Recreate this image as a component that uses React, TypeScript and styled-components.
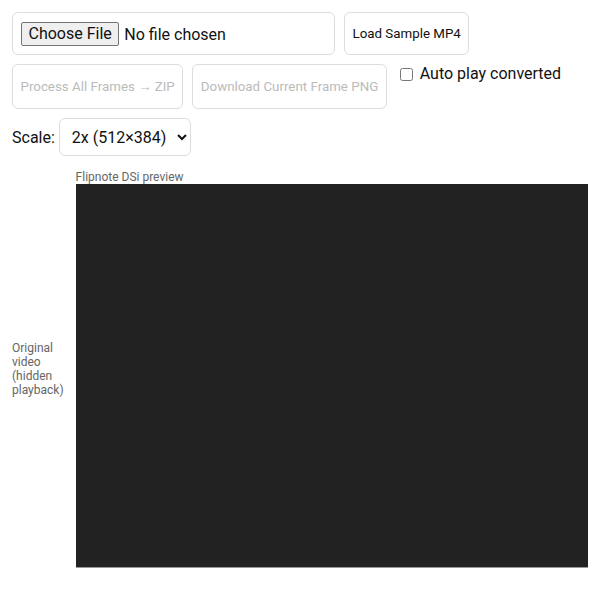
import styled, { createGlobalStyle } from "styled-components";

const GlobalStyle = createGlobalStyle`
  body {
    margin: 12px;
    font-family: Roboto, "Liberation Sans", sans-serif;
    color: #111;
    background: #fff;
  }
`;

export default function App() {
  return (
    <>
      <GlobalStyle />
      <Row>
        <FileBox>
          <FileInput type="file" accept="video/mp4" />
        </FileBox>
        <Button>Load Sample MP4</Button>
      </Row>
      <Row>
        <Button disabled>Process All Frames → ZIP</Button>
        <Button disabled>Download Current Frame PNG</Button>
        <CheckLabel>
          <input type="checkbox" /> Auto play converted
        </CheckLabel>
      </Row>
      <ScaleRow>
        <span>Scale:</span>
        <Select defaultValue="2">
          <option value="1">1x (256×192)</option>
          <option value="2">2x (512×384)</option>
          <option value="3">3x (768×576)</option>
        </Select>
      </ScaleRow>
      <Preview>
        <HiddenNote>Original video (hidden playback)</HiddenNote>
        <CanvasColumn>
          <Caption>Flipnote DSi preview</Caption>
          <Screen />
        </CanvasColumn>
      </Preview>
    </>
  );
}

const Row = styled.div`
  display: flex;
  gap: 9px;
  margin-bottom: 9px;
`;

const FileBox = styled.div`
  border: 1px solid #ddd;
  border-radius: 6px;
  padding: 8px;
  display: flex;
  align-items: center;
`;

const FileInput = styled.input`
  font: 16px Roboto, "Liberation Sans", sans-serif;
  width: 305px;
  color: #111;

  &::file-selector-button {
    font: 16px Roboto, "Liberation Sans", sans-serif;
    height: 24px;
    padding: 0 6.5px;
    margin-right: 5px;
    border: 1px solid #767676;
    border-radius: 2px;
    background: #efefef;
    color: #111;
  }
`;

const Button = styled.button`
  font: 13.33px/17px Roboto, "Liberation Sans", sans-serif;
  padding: 12px 7.5px;
  border: 1px solid #ddd;
  border-radius: 6px;
  background: #fff;
  color: #111;
  cursor: pointer;

  &:disabled {
    color: #bbb;
    padding: 13px 7.5px;
    cursor: default;
  }
`;

const CheckLabel = styled.label`
  font-size: 16px;
  margin-left: 4px;

  input {
    margin: 4px 3px 0 0;
    vertical-align: top;
  }
`;

const ScaleRow = styled.label`
  display: flex;
  align-items: center;
  gap: 4px;
  font-size: 16px;
`;

const Select = styled.select`
  font: 16px Roboto, "Liberation Sans", sans-serif;
  height: 38px;
  width: 132px;
  padding: 0 8px;
  border: 1px solid #ddd;
  border-radius: 6px;
  background: #fff;
  color: #111;
`;

const Preview = styled.div`
  display: flex;
  align-items: center;
  gap: 12px;
  margin-top: 14px;
`;

const HiddenNote = styled.div`
  width: 52px;
  font-size: 12px;
  line-height: 14px;
  color: #666;
`;

const CanvasColumn = styled.div`
  display: flex;
  flex-direction: column;
`;

const Caption = styled.div`
  font-size: 12px;
  line-height: 14px;
  color: #666;
`;

const Screen = styled.div`
  width: 512px;
  height: 383px;
  background: #222;
  border-right: 1px solid #999;
  border-bottom: 1px solid #999;
`;
